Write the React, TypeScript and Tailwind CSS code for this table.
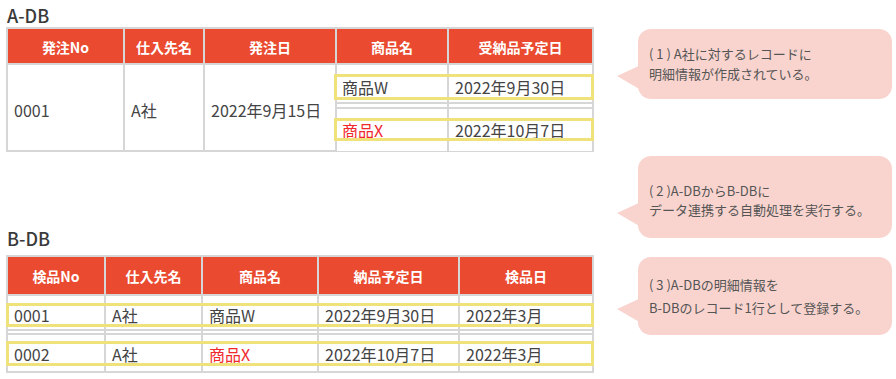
const font = "font-['Noto_Sans_CJK_JP','Noto_Sans',sans-serif]";

function Head({ children }: { children: React.ReactNode }) {
    return (
        <div className="flex items-center justify-center bg-[#ea4a2f] pt-[2px] text-[14px] font-bold text-white">
            {children}
        </div>
    );
}

function Cell({
    children,
    red,
    pad = "",
}: {
    children?: React.ReactNode;
    red?: boolean;
    pad?: string;
}) {
    return (
        <div
            className={`flex items-center bg-white px-[6px] text-[16px] ${pad} ${
                red ? "text-[#f0282d]" : "text-[#444]"
            }`}
        >
            {children}
        </div>
    );
}

function Mark({ pos }: { pos: string }) {
    return (
        <div
            className={`pointer-events-none absolute border-[3px] border-[#efe27a] ${pos}`}
        />
    );
}

function Bubble({
    lines,
    box,
    text,
    tail,
}: {
    lines: string[];
    box: string;
    text: string;
    tail: string;
}) {
    return (
        <div
            className={`relative ml-[21px] flex w-[254px] flex-col justify-center rounded-[13px] bg-[#f9d4ce] pl-[11px] text-[13px] text-[#555] ${box} ${text}`}
        >
            <svg
                className={`absolute -left-[21px] ${tail}`}
                width="24"
                height="26"
                viewBox="0 0 24 26"
            >
                <polygon points="0,11 24,0 24,25" fill="#f9d4ce" />
            </svg>
            {lines.map((l) => (
                <div key={l}>{l}</div>
            ))}
        </div>
    );
}

export default function App() {
    return (
        <div className={`flex h-[379px] w-[896px] overflow-hidden bg-white ${font}`}>
            <div className="w-[617px] shrink-0 pl-[6px]">
                <div className="mt-[3px] h-[24px] pl-[1px] text-[18px] leading-[24px] font-medium text-[#3a3a3a]">
                    A-DB
                </div>
                <div className="grid w-[588px] grid-cols-[115px_78px_130px_110px_143px] grid-rows-[34px_85px] gap-[2px] bg-[#d6d6d6] p-[2px]">
                    <Head>発注No</Head>
                    <Head>仕入先名</Head>
                    <Head>発注日</Head>
                    <Head>商品名</Head>
                    <Head>受納品予定日</Head>
                    <Cell pad="pt-[4px]">0001</Cell>
                    <Cell pad="pt-[4px]">A社</Cell>
                    <Cell pad="pt-[4px]">2022年9月15日</Cell>
                    <div className="col-span-2 flex flex-col gap-[2px]">
                        <div className="relative grid h-[37px] grid-cols-[110px_143px] gap-[2px]">
                            <Cell pad="pt-[9px] pb-[2px] pl-[5px]">商品W</Cell>
                            <Cell pad="pt-[9px] pb-[2px]">2022年9月30日</Cell>
                            <Mark pos="-left-[3px] -right-[2px] top-[9px] h-[26px]" />
                        </div>
                        <div className="grid h-[3px] grid-cols-[110px_143px] gap-[2px]">
                            <div className="bg-white" />
                            <div className="bg-white" />
                        </div>
                        <div className="relative grid h-[41px] grid-cols-[110px_143px] gap-[2px]">
                            <Cell red pad="pt-[9px] pb-[9px] pl-[5px]">
                                商品X
                            </Cell>
                            <Cell pad="pt-[9px] pb-[9px]">2022年10月7日</Cell>
                            <Mark pos="-left-[3px] -right-[2px] top-[9px] h-[23px]" />
                        </div>
                    </div>
                </div>

                <div className="mt-[74px] h-[24px] pl-[1px] text-[18px] leading-[24px] font-medium text-[#3a3a3a]">
                    B-DB
                </div>
                <div className="mt-[5px] flex w-[588px] flex-col gap-[2px] bg-[#d6d6d6] p-[2px]">
                    <div className="grid h-[37px] grid-cols-[96px_95px_114px_139px_132px] gap-[2px]">
                        <Head>検品No</Head>
                        <Head>仕入先名</Head>
                        <Head>商品名</Head>
                        <Head>納品予定日</Head>
                        <Head>検品日</Head>
                    </div>
                    <div className="relative grid h-[33px] grid-cols-[96px_95px_114px_139px_132px] gap-[2px]">
                        <Cell pad="pt-[7px] pb-[2px]">0001</Cell>
                        <Cell pad="pt-[7px] pb-[2px]">A社</Cell>
                        <Cell pad="pt-[7px] pb-[2px]">商品W</Cell>
                        <Cell pad="pt-[7px] pb-[2px]">2022年9月30日</Cell>
                        <Cell pad="pt-[7px] pb-[2px]">2022年3月</Cell>
                        <Mark pos="-left-[2px] -right-[2px] top-[7px] h-[24px]" />
                    </div>
                    <div className="grid h-[2px] grid-cols-[96px_95px_114px_139px_132px] gap-[2px]">
                        <div className="bg-white" />
                        <div className="bg-white" />
                        <div className="bg-white" />
                        <div className="bg-white" />
                        <div className="bg-white" />
                    </div>
                    <div className="relative grid h-[36px] grid-cols-[96px_95px_114px_139px_132px] gap-[2px]">
                        <Cell pad="pt-[6px] pb-[5px]">0002</Cell>
                        <Cell pad="pt-[6px] pb-[5px]">A社</Cell>
                        <Cell red pad="pt-[6px] pb-[5px]">
                            商品X
                        </Cell>
                        <Cell pad="pt-[6px] pb-[5px]">2022年10月7日</Cell>
                        <Cell pad="pt-[6px] pb-[5px]">2022年3月</Cell>
                        <Mark pos="-left-[2px] -right-[2px] top-[6px] h-[25px]" />
                    </div>
                </div>
            </div>

            <div className="flex w-[279px] flex-col">
                <Bubble
                    lines={["( 1 ) A社に対するレコードに", "明細情報が作成されている。"]}
                    box="mt-[29px] h-[70px]"
                    text="leading-[20px]"
                    tail="top-[36px]"
                />
                <Bubble
                    lines={["( 2 )A-DBからB-DBに", "データ連携する自動処理を実行する。"]}
                    box="mt-[57px] h-[82px] pt-[6px]"
                    text="leading-[19px]"
                    tail="top-[46px]"
                />
                <Bubble
                    lines={["( 3 )A-DBの明細情報を", "B-DBのレコード1行として登録する。"]}
                    box="mt-[19px] h-[78px]"
                    text="leading-[23px]"
                    tail="top-[41px]"
                />
            </div>
        </div>
    );
}
